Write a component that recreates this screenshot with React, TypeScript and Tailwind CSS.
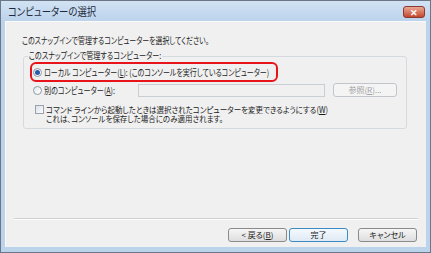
import React from "react";

const jp = "font-['Noto_Sans_CJK_JP','Noto_Sans',sans-serif] [font-feature-settings:'palt']";

const Radio: React.FC<{ checked?: boolean }> = ({ checked }) => (
  <span className="w-[9px] h-[9px] rounded-full border border-[#8f9aa6] bg-gradient-to-br from-[#e4e8ec] to-[#ffffff] flex items-center justify-center shrink-0">
    {checked && <span className="w-[5px] h-[5px] rounded-full bg-[#2a5aa8]" />}
  </span>
);

const Button: React.FC<{ label: React.ReactNode; primary?: boolean; disabled?: boolean; className?: string }> = ({
  label,
  primary,
  disabled,
  className,
}) => (
  <div
    className={
      "h-[14px] rounded-[3px] border flex items-center justify-center text-[8px] leading-none " +
      (disabled
        ? "border-[#c2c6ca] bg-[#f4f4f4] text-[#a3a3a3] "
        : primary
        ? "border-[#3c8bc4] bg-gradient-to-b from-[#f4f9fd] to-[#dfeaf4] text-[#222] "
        : "border-[#8a8a8a] bg-gradient-to-b from-[#f6f6f6] to-[#dedede] text-[#222] ") +
      (className ?? "")
    }
  >
    {label}
  </div>
);

export default function App() {
  return (
    <div className={"w-[431px] h-[253px] bg-[#bcd3ec] border border-[#6b7786] flex flex-col " + jp}>
      {/* title bar */}
      <div className="h-[20px] flex items-center justify-between pl-[7px] pr-[5px] bg-gradient-to-b from-[#d2e2f4] to-[#bcd3ec]">
        <span className="text-[11px] text-[#1e2a3a] leading-none whitespace-nowrap origin-left scale-x-[0.85]">
          コンピューターの選択
        </span>
        <div className="w-[22px] h-[12px] mt-[2px] rounded-[3px] border border-[#8a3a2e] bg-gradient-to-b from-[#e9a795] to-[#c4452c] flex items-center justify-center">
          <span className="text-[9px] leading-none font-bold text-white">✕</span>
        </div>
      </div>

      {/* client area */}
      <div className="flex-1 mx-[4px] mb-[5px] bg-[#f0f0f0] border-l border-t border-[#fafafa] flex flex-col text-[#1c1c1c]">
        <div className="text-[9px] leading-none mt-[14px] ml-[16px] whitespace-nowrap origin-left scale-x-[0.77]">
          このスナップインで管理するコンピューターを選択してください。
        </div>

        {/* group box */}
        <div className="relative mt-[11px] ml-[17px] w-[384px] h-[73px] border border-[#d5dae0] rounded-[3px]">
          <span className="absolute -top-[6px] left-[4px] bg-[#f0f0f0] px-[1px] text-[9px] leading-none whitespace-nowrap origin-left scale-x-[0.79]">
            このスナップインで管理するコンピューター:
          </span>

          <div className="flex flex-col pt-[5px] pl-[6px]">
            <div className="w-[248px] h-[20px] rounded-[6px] border-2 border-[#e8141c] flex items-center gap-[2px] pl-[1px]">
              <Radio checked />
              <span className="text-[9px] leading-none whitespace-nowrap origin-left scale-x-[0.775]">
                ローカル コンピューター(<u>L</u>): (このコンソールを実行しているコンピューター)
              </span>
            </div>

            <div className="flex items-center mt-[1px] h-[14px] pl-[3px]">
              <Radio />
              <div className="ml-[2px] w-[94px] shrink-0">
                <div className="text-[9px] leading-none whitespace-nowrap origin-left scale-x-[0.79]">
                  別のコンピューター(<u>A</u>):
                </div>
              </div>
              <div className="w-[187px] h-[13px] border border-[#c9ced4] bg-[#f0f0f0] shrink-0" />
              <Button label={<span>参照(<u>R</u>)...</span>} disabled className="w-[64px] ml-[8px] shrink-0" />
            </div>

            <div className="flex items-start mt-[8px] pl-[5px]">
              <span className="w-[9px] h-[9px] border border-[#9aa3ad] bg-gradient-to-br from-[#dde2e7] to-[#fbfbfb] shrink-0" />
              <div className="ml-[2px] text-[8.5px] leading-[9px] whitespace-nowrap origin-left scale-x-[0.88]">
                <div>コマンド ラインから起動したときは選択されたコンピューターを変更できるようにする(<u>W</u>)</div>
                <div>これは、コンソールを保存した場合にのみ適用されます。</div>
              </div>
            </div>
          </div>
        </div>

        <div className="flex-1" />

        {/* separator */}
        <div className="mx-[8px] border-t border-[#d0d0d0] border-b border-b-[#fdfdfd]" />

        {/* buttons */}
        <div className="flex justify-end items-center gap-[2px] pr-[9px] mt-[8px] mb-[5px]">
          <Button label={<span>&lt; 戻る(<u>B</u>)</span>} className="w-[59px]" />
          <Button label="完了" primary className="w-[59px]" />
          <Button label="キャンセル" className="w-[59px] ml-[8px]" />
        </div>
      </div>
    </div>
  );
}
